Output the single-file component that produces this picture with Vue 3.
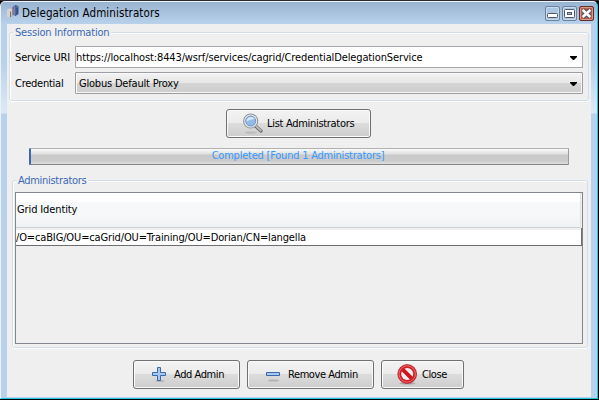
<script setup>
const identities = ['/O=caBIG/OU=caGrid/OU=Training/OU=Dorian/CN=langella']
</script>

<template>
  <div class="desktop">
    <div class="window">
      <header class="titlebar">
        <svg class="app-icon" width="12" height="13" viewBox="0 0 12 13">
          <path d="M6 1.5 8.5 0 11.5 1.2V9L8.5 11 6 9.5Z" fill="#35558d" />
          <path d="M6.2 1.8 8.3 1V10L6.2 9Z" fill="#6c9be0" />
          <path d="M9 1h2v2H9z" fill="#5b6784" />
          <path d="M5 2h2.500v7H5z" fill="#b1443c" opacity=".55" />
          <path d="M0 5.500Q0 3.500 2.700 3.500T5.800 5.500V11H4V7H3v5H0Z" fill="#d6d2d0" />
          <path d="M3 6.500h1.200V12H3z" fill="#77777f" />
          <path d="M5 4.500h1.500v6H5z" fill="#8c8a94" />
        </svg>
        <h1 class="title"><span class="t-title">Delegation Administrators</span></h1>
        <div class="controls">
          <svg width="15" height="15" viewBox="0 0 15 15">
            <rect x=".5" y=".5" width="14" height="14" rx="1.5" fill="#adc6e0" stroke="#68819c" />
            <rect x="1.5" y="1.5" width="12" height="12" rx="1" fill="none" stroke="#c9dcee" />
            <rect x="2.5" y="7.5" width="10" height="4" rx="1" fill="#fff" stroke="#535666" />
          </svg>
          <svg width="15" height="15" viewBox="0 0 15 15">
            <rect x=".5" y=".5" width="14" height="14" rx="1.5" fill="#adc6e0" stroke="#68819c" />
            <rect x="1.5" y="1.5" width="12" height="12" rx="1" fill="none" stroke="#c9dcee" />
            <rect x="2.5" y="3.5" width="10" height="8" rx="1" fill="#fff" stroke="#535666" />
            <rect x="5.5" y="6.5" width="4" height="2" fill="#a9c2dc" stroke="#535666" />
          </svg>
          <svg width="15" height="15" viewBox="0 0 15 15">
            <rect x=".5" y=".5" width="14" height="14" rx="1.5" fill="#b9604f" stroke="#642e2b" />
            <rect x="1.5" y="1.5" width="12" height="12" rx="1" fill="none" stroke="#d99a8c" />
            <path d="M4 4l7 7M11 4l-7 7" stroke="#535666" stroke-width="4.6" />
            <path d="M3.7 4l7.600 7M11.300 4l-7.600 7" stroke="#fff" stroke-width="2.500" />
          </svg>
        </div>
      </header>

      <main class="content">
        <fieldset class="group session">
          <legend class="legend"><span class="t-session">Session Information</span></legend>
          <div class="field">
            <label><span class="t-uri">Service URI</span></label>
            <div class="combo editable">
              <span class="t-url">https://localhost:8443/wsrf/services/cagrid/CredentialDelegationService</span>
              <svg class="arrow" width="7" height="4" viewBox="0 0 7 4"><path d="M0 0h7v1L4 4H3L0 1Z" fill="#000" /></svg>
            </div>
          </div>
          <div class="field">
            <label><span class="t-cred">Credential</span></label>
            <div class="combo select">
              <span class="t-globus">Globus Default Proxy</span>
              <svg class="arrow" width="7" height="4" viewBox="0 0 7 4"><path d="M0 0h7v1L4 4H3L0 1Z" fill="#000" /></svg>
            </div>
          </div>
        </fieldset>

        <button class="btn list">
          <svg width="22" height="22" viewBox="0 0 22 22">
            <ellipse cx="9" cy="19.500" rx="6" ry="1.300" fill="#000" opacity=".1" />
            <path d="M13.500 13l5.500 5" stroke="#666" stroke-width="3.200" stroke-linecap="round" />
            <path d="M14 13.200l4.800 4.400" stroke="#c4c4c4" stroke-width="1.600" stroke-linecap="round" />
            <circle cx="8.700" cy="8" r="7" fill="#8fb5e4" stroke="#8c918e" stroke-width="1.200" />
            <circle cx="8.700" cy="8" r="5.900" fill="none" stroke="#e4e9ed" stroke-width="1.300" />
            <circle cx="8.700" cy="8" r="5" fill="#95bae8" stroke="#6588b7" stroke-width=".7" />
            <path d="M4.500 8.500Q4.500 4 9 4q3 0 3.700 2Q8 6 4.500 8.500Z" fill="#d5e7fa" />
          </svg>
          <span class="t-list">List Administrators</span>
        </button>

        <div class="progress"><span class="t-progress">Completed [Found 1 Administrators]</span></div>

        <fieldset class="group admins">
          <legend class="legend"><span class="t-admins">Administrators</span></legend>
          <div class="table">
            <div class="thead"><span class="t-grid">Grid Identity</span></div>
            <div v-for="id in identities" :key="id" class="row"><span class="t-row">{{ id }}</span></div>
          </div>
        </fieldset>

        <footer class="actions">
          <button class="btn add">
            <svg width="15" height="15" viewBox="0 0 15 15">
              <ellipse cx="8" cy="14" rx="5" ry=".8" fill="#000" opacity=".2" />
              <path d="M5.500 .5h3v5h5v3h-5v5h-3v-5h-5v-3h5z" fill="#a9c8ed" stroke="#3769ad" />
            </svg>
            <span class="t-add">Add Admin</span>
          </button>
          <button class="btn remove">
            <svg width="15" height="15" viewBox="0 0 15 15">
              <ellipse cx="7.500" cy="13.500" rx="5.500" ry="1" fill="#000" opacity=".16" />
              <path d="M.5 5.500h13v3H.5z" fill="#a9c8ed" stroke="#3769ad" />
            </svg>
            <span class="t-remove">Remove Admin</span>
          </button>
          <button class="btn close">
            <svg width="21" height="21" viewBox="0 0 21 21">
              <ellipse cx="10.500" cy="19.300" rx="8" ry="1.300" fill="#000" opacity=".2" />
              <circle cx="10.200" cy="10" r="9.400" fill="#d3202a" stroke="#b3161c" stroke-width=".7" />
              <circle cx="10.200" cy="10" r="8.200" fill="none" stroke="#ee7575" stroke-width=".9" />
              <circle cx="10.200" cy="10" r="6" fill="#f1f0f0" />
              <path d="M5.800 5.600l8.800 8.800" stroke="#d01319" stroke-width="3.800" />
            </svg>
            <span class="t-close">Close</span>
          </button>
        </footer>
      </main>
    </div>
  </div>
</template>

<style>
body { margin: 0; overflow: hidden; }
</style>

<style scoped>
* { box-sizing: border-box; }
.desktop {
  width: 599px;
  height: 400px;
  padding: 1px 1px 1px 0;
  background: linear-gradient(#2d2831 0 1px, #000 1px);
  font: 11px/14px "DejaVu Sans Condensed", "DejaVu Sans", sans-serif;
  font-stretch: condensed;
  color: #000;
}
.window {
  height: 398px;
  padding: 0 6px 1px 6px;
  border: 1px solid #1fc6e3;
  border-top-color: #eef4fb;
  border-left: 1px solid #eaf2fa;
  border-radius: 5px 5px 0 0;
  background: linear-gradient(#99b4d1 0, #b9d1ea 22px, #b9d1ea 60px, #dce8f5 108px, #dce8f5 111px, #b9d1ea 112px);
}
.titlebar {
  height: 22px;
  display: flex;
  align-items: flex-start;
  padding: 3px 0 0;
}
.app-icon { flex: none; }
.title {
  flex: 1;
  margin: 0 0 0 3px;
  padding-top: 1px;
  font-size: 11.5px;
  font-weight: 400;
  white-space: nowrap;
}
.controls { display: flex; gap: 2px; margin: 1px -3px 0 0; }
.content {
  height: 373px;
  background: #efefef;
  display: flex;
  flex-direction: column;
  align-items: flex-start;
}
span { white-space: nowrap; }
.t-title { letter-spacing: 0.09px; }
.t-session { letter-spacing: -0.2px; }
.t-uri { letter-spacing: -0.15px; }
.t-url { letter-spacing: -0.125px; }
.t-cred { letter-spacing: -0.25px; }
.t-globus { letter-spacing: -0.2px; }
.t-list { letter-spacing: -0.3px; }
.t-progress { letter-spacing: -0.22px; }
.t-admins { letter-spacing: -0.3px; }
.t-grid { letter-spacing: -0.12px; }
.t-row { letter-spacing: -0.14px; }
.t-add, .t-remove, .t-close { letter-spacing: -0.42px; }
.group {
  min-width: 0;
  margin: 0;
  padding: 0;
  border: 1px solid #d2dee9;
  border-radius: 3px;
  box-shadow: 0 1px #fff, inset 1px 0 #fff, inset 0 1px #fff;
}
.legend {
  padding: 0 2px;
  height: 14px;
  line-height: 16px;
  color: #3b69b5;
  background: #efefef;
}
.session { width: 580px; height: 76px; margin: 1px 0 0 2px; }
.session .legend { margin-left: 3px; }
.field { display: flex; align-items: center; height: 22px; padding-left: 4px; }
.field + .field { margin-top: 4px; }
.session .field:nth-of-type(1) { margin-top: 7px; }
.field label { width: 61px; padding: 2px 0 0 1px; }
.combo {
  width: 508px;
  height: 22px;
  display: flex;
  align-items: center;
  justify-content: space-between;
  border: 1px solid #a5a7ac;
  padding: 2px 5px 0 0;
}
.editable { background: #fff; }
.select {
  padding-left: 3px;
  background: linear-gradient(#f3f3f3, #e7e7e7 48%, #d5d5d5 50%, #cdcdcd);
  box-shadow: inset 1px 1px #fafafa, inset -1px -1px #f6f6f6;
  border-color: #9c9ea3;
  border-radius: 1px;
}
.btn {
  display: flex;
  align-items: center;
  height: 29px;
  margin: 0;
  padding: 0;
  border: 1px solid #707070;
  border-radius: 3px;
  background: linear-gradient(#f3f3f3, #ebebeb 48%, #dcdcdc 50%, #cdcdcd);
  box-shadow: inset 0 0 0 1px #fafafa;
  color: #000;
  font: inherit;
}
.btn svg { flex: none; }
.list { width: 145px; margin: 8px 0 0 219px; padding-left: 15px; gap: 3px; }
.progress {
  width: 540px;
  height: 17px;
  margin: 10px 0 0 22px;
  padding-right: 3px;
  display: flex;
  justify-content: center;
  border: 1px solid #9b9b9b;
  border-top-color: #b2b2b2;
  border-bottom-color: #848484;
  border-left: 2px solid #3768b3;
  border-radius: 1px;
  background: linear-gradient(#fafafa, #e0e0e0 5px, #cacaca 6px, #cbcbcb 12px, #e0e0e0);
  color: #3399ff;
  line-height: 13px;
}
.admins { width: 576px; height: 175px; margin: 8px 0 0 5px; padding-left: 2px; }
.admins .legend { margin-left: 1px; }
.table {
  width: 568px;
  height: 152px;
  margin: 5px 0 0;
  border: 1px solid #82868f;
  background: #efefef;
}
.thead {
  width: 565px;
  height: 35px;
  padding: 10px 0 0 1px;
  border-right: 1px solid #e2e3e5;
  border-bottom: 1px solid #d0d1d3;
  background: linear-gradient(#fff 0 9px, #f7f8fa 9px 21px, #f0f1f3);
}
.row {
  width: 566px;
  height: 18px;
  padding-top: 3px;
  background: linear-gradient(#efefef 0 2px, #fff 2px);
  border-right: 1px solid #6e6e70;
  border-bottom: 1px solid #6e6e70;
}
.actions { display: flex; gap: 7px; margin: 12px 0 0 126px; }
.add { width: 107px; padding-left: 18px; gap: 7px; }
.remove { width: 127px; padding-left: 18px; gap: 7px; }
.close { width: 83px; padding-left: 15px; gap: 4px; }
</style>
